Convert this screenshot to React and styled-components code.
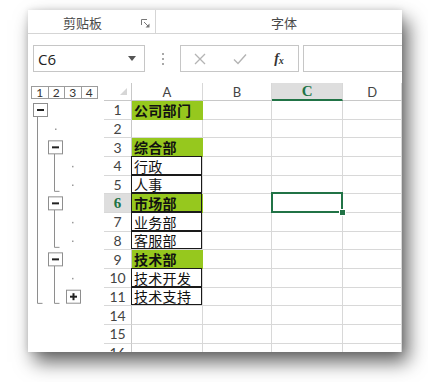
import React from 'react';
import styled, { createGlobalStyle, css } from 'styled-components';

const GREEN = '#217346';
const FILL = '#96C81E';
const GRID = '#D8D8D8';
const R = 18.67;

const Global = createGlobalStyle`
  html, body { margin: 0; background: #fff; }
  body { font-family: "Liberation Sans", Arial, sans-serif; }
`;

const Page = styled.div`
  width: 428px;
  height: 382px;
  box-sizing: border-box;
  padding: 10px 26px 0 28px;
  overflow: hidden;
`;

const Panel = styled.div`
  width: 374px;
  height: 342px;
  background: #fff;
  overflow: hidden;
  display: flex;
  flex-direction: column;
  box-shadow: 6px 10px 18px rgba(0, 0, 0, 0.62), 0 0 6px rgba(0, 0, 0, 0.12);
`;

/* ribbon group labels */
const Ribbon = styled.div`
  height: 23px;
  flex: none;
  display: flex;
  border-bottom: 1px solid #D5D5D5;
  font-family: "Noto Sans CJK SC", sans-serif;
  font-size: 13px;
  color: #4a4a4a;
`;

const Group = styled.div`
  display: flex;
  align-items: center;
  padding-top: 2px;
  width: ${p => p.$w ? p.$w + 'px' : 'auto'};
  flex: ${p => p.$w ? 'none' : '1'};
  padding-left: ${p => p.$pl || 0}px;
  border-right: ${p => p.$sep ? '1px solid #D5D5D5' : 'none'};
  box-sizing: border-box;
`;

const GroupLabel = styled.span`
  flex: 1;
  text-align: center;
`;

const Launcher = styled.svg`
  width: 9px;
  height: 9px;
  margin: 2px 5px 0 4px;
`;

/* formula bar */
const FormulaBar = styled.div`
  height: 49px;
  flex: none;
  box-sizing: border-box;
  display: flex;
  align-items: center;
  padding-left: 5px;
`;

const NameBox = styled.div`
  width: 112px;
  height: 27px;
  box-sizing: border-box;
  border: 1px solid #C6C6C6;
  display: flex;
  align-items: center;
  justify-content: space-between;
  padding: 0 8px 0 4px;
  font-family: "Open Sans", sans-serif;
  font-size: 15px;
  color: #222;
`;

const Grip = styled.div`
  width: 35px;
  display: flex;
  flex-direction: column;
  align-items: center;
  gap: 3px;
  span { width: 2px; height: 2px; background: #A8A8A8; }
`;

const FxButtons = styled.div`
  width: 119px;
  height: 27px;
  box-sizing: border-box;
  border: 1px solid #C6C6C6;
  display: grid;
  grid-template-columns: 38px 42px 36px;
  align-items: center;
  justify-items: center;
`;

const FxText = styled.span`
  font-family: "Liberation Serif", serif;
  font-style: italic;
  font-weight: bold;
  font-size: 14px;
  color: #333;
  sub { font-size: 10px; vertical-align: -1px; }
`;

const FormulaInput = styled.div`
  flex: 1;
  height: 27px;
  margin-left: 4px;
  box-sizing: border-box;
  border: 1px solid #C6C6C6;
  border-right: none;
`;

/* sheet */
const Sheet = styled.div`
  display: grid;
  grid-template-columns: 76px 28px 70.7px 69.6px 71px 1fr;
  grid-template-rows: 18px repeat(14, ${R}px);
  font-family: Lato, "Liberation Sans", sans-serif;
`;

const Levels = styled.div`
  display: flex;
  align-items: center;
  padding-left: 3px;
`;

const LevelBtn = styled.span`
  width: 17.5px;
  height: 13px;
  box-sizing: border-box;
  border: 1px solid #9C9C9C;
  margin-left: ${p => p.$first ? 0 : -1}px;
  display: flex;
  align-items: center;
  justify-content: center;
  font-size: 12px;
  color: #333;
`;

const Corner = styled.div`
  display: flex;
  align-items: flex-end;
  justify-content: flex-end;
  padding: 0 4px 5px 0;
  border-bottom: 1px solid #C8C8C8;
  border-right: 1px solid #C8C8C8;
  &::before {
    content: '';
    width: 0;
    height: 0;
    border-left: 7px solid transparent;
    border-bottom: 7px solid #D6D6D6;
  }
`;

const ColHead = styled.div`
  display: flex;
  align-items: center;
  justify-content: center;
  font-size: 13px;
  color: #444;
  border-right: 1px solid ${GRID};
  border-bottom: 1px solid #C8C8C8;
  box-sizing: border-box;
  ${p => p.$sel && css`
    background: #DEDEDE;
    border-bottom: 2px solid ${GREEN};
    color: ${GREEN};
    font-family: "Liberation Serif", serif;
    font-weight: bold;
    font-size: 15px;
  `}
`;

const RowHead = styled.div`
  grid-column: 2;
  display: flex;
  align-items: center;
  justify-content: center;
  font-size: 14px;
  color: #444;
  border-bottom: 1px solid ${GRID};
  border-right: 1px solid #C8C8C8;
  box-sizing: border-box;
  ${p => p.$sel && css`
    background: #DEDEDE;
    color: ${GREEN};
    font-family: "Liberation Serif", serif;
    font-weight: bold;
    font-size: 15px;
  `}
`;

const Cell = styled.div`
  position: relative;
  display: flex;
  align-items: flex-end;
  padding: 0 0 1px 2px;
  box-sizing: border-box;
  border-right: 1px solid ${GRID};
  border-bottom: 1px solid ${GRID};
  font-family: "Noto Sans CJK SC", sans-serif;
  font-size: 14px;
  line-height: 16px;
  letter-spacing: 0.3px;
  color: #111;
  white-space: nowrap;
  ${p => p.$fill && css`
    background: ${FILL};
    border-color: ${FILL};
    font-weight: bold;
  `}
  ${p => p.$boxed && css`
    &::before {
      content: '';
      position: absolute;
      inset: -1px 0 0 -1px;
      border: 1px solid #1a1a1a;
      pointer-events: none;
    }
  `}
  ${p => p.$active && css`
    &::after {
      content: '';
      position: absolute;
      inset: -2px -1px -1px -1px;
      border: 2px solid ${GREEN};
      pointer-events: none;
    }
  `}
`;

const FillHandle = styled.span`
  position: absolute;
  right: -4px;
  bottom: -4px;
  width: 5px;
  height: 5px;
  background: ${GREEN};
  border: 1px solid #fff;
  z-index: 2;
`;

const Outline = styled.svg`
  grid-column: 1;
  grid-row: 2 / span 14;
  width: 76px;
  height: ${14 * R}px;
`;

const ROWS = [
  { n: 1, text: '公司部门', fill: true },
  { n: 2 },
  { n: 3, text: '综合部', fill: true },
  { n: 4, text: '行政', boxed: true },
  { n: 5, text: '人事', boxed: true },
  { n: 6, text: '市场部', fill: true, boxed: true, sel: true },
  { n: 7, text: '业务部', boxed: true },
  { n: 8, text: '客服部', boxed: true },
  { n: 9, text: '技术部', fill: true },
  { n: 10, text: '技术开发', boxed: true },
  { n: 11, text: '技术支持', boxed: true },
  { n: 14 },
  { n: 15 },
  { n: 16 },
];

const top = i => i * R;

function OutlineButton({ x, row, plus }) {
  const y = top(row) + 2.5;
  return (
    <g>
      <rect x={x} y={y} width="14" height="13" fill="#fff" stroke="#8E8E8E" />
      <line x1={x + 3.5} x2={x + 10.5} y1={y + 6.5} y2={y + 6.5} stroke="#222" strokeWidth="2" />
      {plus && <line x1={x + 7} x2={x + 7} y1={y + 3} y2={y + 10} stroke="#222" strokeWidth="2" />}
    </g>
  );
}

function Bracket({ x, from, to }) {
  const y1 = top(from) + 15.5;
  const y2 = top(to) - 3;
  return <path d={`M${x} ${y1}V${y2}H${x + 5}`} fill="none" stroke="#8E8E8E" />;
}

function OutlineTree() {
  const dot = (x, row) => <rect key={`${x}-${row}`} x={x} y={top(row) + R / 2 - 0.5} width="1.5" height="1.5" fill="#9A9A9A" />;
  return (
    <Outline viewBox={`0 0 76 ${14 * R}`}>
      <Bracket x={9.5} from={0} to={11} />
      <Bracket x={26.5} from={2} to={5} />
      <Bracket x={26.5} from={5} to={8} />
      <Bracket x={26.5} from={8} to={11} />
      <OutlineButton x={5.5} row={0} />
      <OutlineButton x={20.5} row={2} />
      <OutlineButton x={20.5} row={5} />
      <OutlineButton x={20.5} row={8} />
      <OutlineButton x={38.5} row={10} plus />
      {dot(27, 1)}
      {[3, 4, 6, 7, 9].map(r => dot(44, r))}
    </Outline>
  );
}

export default function App() {
  return (
    <Page>
      <Global />
      <Panel>
        <Ribbon>
          <Group $w={128} $sep>
            <GroupLabel>剪贴板</GroupLabel>
            <Launcher viewBox="0 0 9 9">
              <path d="M0.5 6V0.5H6" fill="none" stroke="#777" />
              <path d="M3 3L7.5 7.5" stroke="#777" />
              <path d="M8.5 4.5V8.5H4.5Z" fill="#777" />
            </Launcher>
          </Group>
          <Group $pl={10}>
            <GroupLabel>字体</GroupLabel>
          </Group>
        </Ribbon>

        <FormulaBar>
          <NameBox>
            C6
            <svg width="8" height="5" viewBox="0 0 8 5"><path d="M0 0H8L4 5Z" fill="#555" /></svg>
          </NameBox>
          <Grip><span /><span /><span /></Grip>
          <FxButtons>
            <svg width="12" height="12" viewBox="0 0 12 12">
              <path d="M1 1L11 11M11 1L1 11" stroke="#B4B4B4" strokeWidth="1.3" />
            </svg>
            <svg width="14" height="12" viewBox="0 0 14 12">
              <path d="M1 6.5L5 10.5L13 1.5" fill="none" stroke="#B4B4B4" strokeWidth="1.4" />
            </svg>
            <FxText>f<sub>x</sub></FxText>
          </FxButtons>
          <FormulaInput />
        </FormulaBar>

        <Sheet>
          <Levels>
            {[1, 2, 3, 4].map(l => <LevelBtn key={l} $first={l === 1}>{l}</LevelBtn>)}
          </Levels>
          <Corner />
          <ColHead>A</ColHead>
          <ColHead>B</ColHead>
          <ColHead $sel>C</ColHead>
          <ColHead>D</ColHead>

          <OutlineTree />
          {ROWS.map(r => (
            <React.Fragment key={r.n}>
              <RowHead $sel={r.sel}>{r.n}</RowHead>
              <Cell $fill={r.fill} $boxed={r.boxed}>{r.text}</Cell>
              <Cell />
              <Cell $active={r.sel}>{r.sel && <FillHandle />}</Cell>
              <Cell />
            </React.Fragment>
          ))}
        </Sheet>
      </Panel>
    </Page>
  );
}
